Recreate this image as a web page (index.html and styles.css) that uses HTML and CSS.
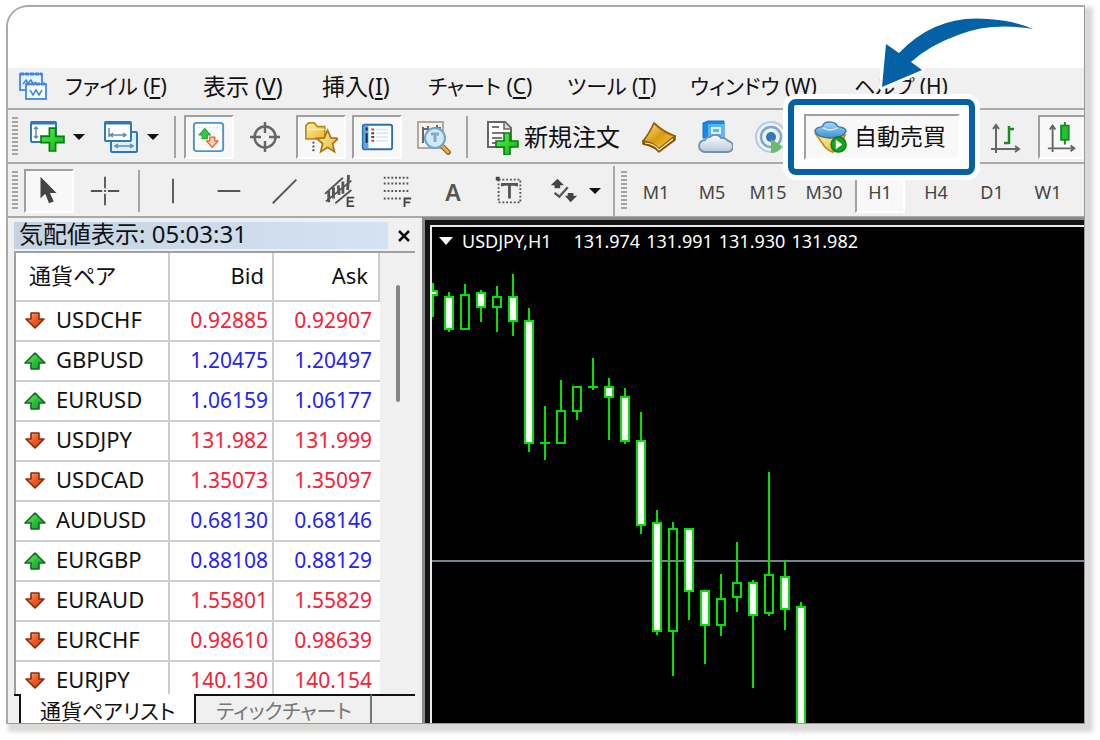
FILE: index.html
```html
<!DOCTYPE html>
<html lang="ja">
<head>
<meta charset="utf-8">
<title>USDJPY,H1</title>
<link rel="stylesheet" href="styles.css">
</head>
<body>
<svg class="defs" aria-hidden="true">
  <defs>
    <linearGradient id="red" x1="0" y1="0" x2="1" y2="1"><stop offset="0" stop-color="#ffb287"/><stop offset=".5" stop-color="#ec5a22"/><stop offset="1" stop-color="#d13c0c"/></linearGradient>
    <linearGradient id="green" x1="0" y1="0" x2="1" y2="1"><stop offset="0" stop-color="#8ff08f"/><stop offset=".5" stop-color="#2fbf3c"/><stop offset="1" stop-color="#119a22"/></linearGradient>
    <linearGradient id="plus" x1="0" y1="0" x2="1" y2="1"><stop offset="0" stop-color="#5df05a"/><stop offset="1" stop-color="#06b50a"/></linearGradient>
    <linearGradient id="gold" x1="0" y1="0" x2="1" y2="1"><stop offset="0" stop-color="#fff3a8"/><stop offset="1" stop-color="#e9b437"/></linearGradient>
    <linearGradient id="book" x1="0" y1="0" x2="1" y2="1"><stop offset="0" stop-color="#ffe58a"/><stop offset=".5" stop-color="#d99b14"/><stop offset="1" stop-color="#f5c94a"/></linearGradient>
    <linearGradient id="cloud" x1="0" y1="0" x2="0" y2="1"><stop offset="0" stop-color="#ffffff"/><stop offset="1" stop-color="#b4c7de"/></linearGradient>
    <linearGradient id="hat" x1="0" y1="0" x2="0" y2="1"><stop offset="0" stop-color="#a8d8fb"/><stop offset="1" stop-color="#3f8fd0"/></linearGradient>
    <symbol id="down" viewBox="0 0 22 22"><path d="M7 3h8v6h5l-9 9-9-9h5z" fill="url(#red)" stroke="#8e2a0a" stroke-width="1.6" stroke-linejoin="round"/></symbol>
    <symbol id="up" viewBox="0 0 22 22"><path d="M7 19h8v-6h6L11 3 1 13h6z" fill="url(#green)" stroke="#0d6d1a" stroke-width="1.6" stroke-linejoin="round"/></symbol>
    <symbol id="up-light" viewBox="0 0 22 22"><path d="M7 19h8v-6h5L11 3 2 13h5z" fill="#39c645" stroke="#1f9a2c" stroke-width="1.6" stroke-linejoin="round"/></symbol>
    <symbol id="down-light" viewBox="0 0 22 22"><path d="M7 3h8v6h5l-9 10L2 9h5z" fill="#ffd2b8" stroke="#ee5a26" stroke-width="2" stroke-linejoin="round"/></symbol>
    <symbol id="add" viewBox="0 0 24 24"><path d="M9 1h6v8h8v6h-8v8H9v-8H1V9h8z" fill="url(#plus)" stroke="#087d0c" stroke-width="1.6"/></symbol>
  </defs>
</svg>
<main class="window">
  <div class="titlebar"></div>

  <nav class="menubar">
    <svg class="app-icon" viewBox="0 0 30 30" aria-hidden="true"><g fill="#e8f1fd" stroke="#3e86ec" stroke-width="1.800"><rect x="2" y="3" width="22" height="16"/><path d="M2 3h22" stroke-width="3" stroke-dasharray="4 1"/><path d="M5 13l3-4 2 3 3-3 2 4 3-2" fill="none" stroke-width="1.500"/><rect x="8" y="13" width="20" height="15" fill="#fff"/><path d="M8 13h20" stroke-width="3" stroke-dasharray="4 1"/><path d="M12 19l3 5 3-5 3 5 3-5" fill="none" stroke-width="1.500"/></g></svg>
    <button>ファイル (<u>F</u>)</button>
    <button class="kanji">表示 (<u>V</u>)</button>
    <button class="kanji">挿入(<u>I</u>)</button>
    <button>チャート (<u>C</u>)</button>
    <button>ツール (<u>T</u>)</button>
    <button>ウィンドウ (W)</button>
    <button>ヘルプ (H)</button>
  </nav>

  <div class="toolbar" role="toolbar" aria-label="標準">
    <span class="grip"></span>
    <button class="tool menu-tool" aria-label="新規チャート">
      <svg viewBox="0 0 36 36"><rect x="2" y="3" width="25" height="20" rx="1" fill="#fff" stroke="#2f79b8" stroke-width="2"/><path d="M2 4h25" stroke="#2f79b8" stroke-width="3"/><path d="M7 8v11M5 10l2-2 2 2M5 17l2 2 2-2M11 17h8" fill="none" stroke="#5b8db4" stroke-width="1.500"/><use href="#add" x="11" y="8" width="25" height="25"/></svg>
      <i class="caret"></i>
    </button>
    <button class="tool menu-tool profiles" aria-label="プロファイル">
      <svg viewBox="0 0 36 36"><rect x="8" y="13" width="26" height="20" rx="1" fill="#dff0fb" stroke="#2f79b8" stroke-width="2"/><path d="M13 27h16M15 25l-3 2 3 2M27 25l3 2-3 2" fill="none" stroke="#5b8db4" stroke-width="1.500"/><rect x="2" y="3" width="26" height="19" rx="1" fill="#fff" stroke="#2f79b8" stroke-width="2"/><path d="M2 4h26" stroke="#2f79b8" stroke-width="3"/><path d="M6 9v9M8 16h15M10 14l-3 2 3 2M20 14l3 2-3 2" fill="none" stroke="#5b8db4" stroke-width="1.500"/></svg>
      <i class="caret"></i>
    </button>
    <span class="separator"></span>
    <button class="tool" aria-pressed="true" aria-label="気配値表示">
      <svg viewBox="0 0 36 36"><rect x="2" y="3" width="31" height="30" rx="3" fill="#fff" stroke="#4b93cd" stroke-width="2"/><path d="M6 8h23M6 14h23M6 20h23M6 26h23" stroke="#dde3e8" stroke-dasharray="2 2"/><use href="#up-light" x="6" y="7" width="15" height="15"/><use href="#down-light" x="14" y="16" width="15" height="15"/></svg>
    </button>
    <button class="tool" aria-label="データウィンドウ">
      <svg viewBox="0 0 36 36"><g fill="none" stroke="#666" stroke-width="2.500"><circle cx="18" cy="18" r="10.500"/><path d="M18 3v11M18 22v11M3 18h11M22 18h11"/></g></svg>
    </button>
    <button class="tool" aria-pressed="true" aria-label="ナビゲーター">
      <svg viewBox="0 0 36 36"><path d="M2 20V6l3-3h6l3 4h8v13z" fill="url(#gold)" stroke="#b98a1d" stroke-width="1.800"/><path d="M3 10h19" stroke="#fff8cd"/><path d="M10 23v12" stroke="#444" stroke-width="2" stroke-dasharray="2 2"/><path d="M25 11l3.500 8 8 .5-6.200 5.500 2 8.500L25 29l-7.300 4.500 2-8.500-6.200-5.500 8-.5z" fill="url(#gold)" stroke="#a77512" stroke-width="1.800"/></svg>
    </button>
    <button class="tool" aria-pressed="true" aria-label="ターミナル">
      <svg viewBox="0 0 36 36"><rect x="3" y="5" width="31" height="26" rx="2" fill="#fff" stroke="#2b70b0" stroke-width="2"/><path d="M4 6h5v24H4z" fill="#5fa5df"/><path d="M7 8v3M7 14v10" stroke="#124" stroke-width="2"/><path d="M17 10h13M17 14h13M17 18h13M17 22h13" stroke="#d3e6f5" stroke-width="1.500"/><path d="M12 10h3M12 22h3" stroke="#e33" stroke-width="2"/><path d="M12 14h3M12 18h3" stroke="#444" stroke-width="2"/></svg>
    </button>
    <button class="tool" aria-label="ストラテジーテスター">
      <svg viewBox="0 0 36 36"><rect x="3" y="3" width="25" height="26" fill="#f6f4f0" stroke="#aaa095" stroke-width="1.800"/><path d="M8 8v16M8 10h5M13 7v8M22 6v5M18 9h8" stroke="#666" stroke-width="2"/><path d="M26 26l9 9" stroke="#8b5a0a" stroke-width="5"/><path d="M26 26l8 8" stroke="#eab041" stroke-width="3"/><circle cx="20" cy="19" r="10" fill="#cfe8fa" fill-opacity=".9" stroke="#6da5d4" stroke-width="2"/><path d="M16 15h8M20 15v8" fill="none" stroke="#84a9c6" stroke-width="3"/></svg>
    </button>
    <span class="separator"></span>
    <button class="tool order"><svg viewBox="0 0 36 36"><path d="M4 3h17l6 6v19H4z" fill="#fff" stroke="#666" stroke-width="2"/><path d="M20 3v7h7" fill="#ddd" stroke="#666" stroke-width="1.500"/><path d="M8 8h7M8 14h12M8 19h10M8 24h6" stroke="#777" stroke-width="2"/><use href="#add" x="11" y="13" width="24" height="24"/></svg><span>新規注文</span></button>
    <button class="tool" aria-label="MetaEditor">
      <svg viewBox="0 0 36 36"><path d="M2 22v3q11 2 16 8l16-12v-4z" fill="#8f5a08" stroke="#7e4e06" stroke-width="1.500" stroke-linejoin="round"/><path d="M2 22Q8 15 13 4q9 9 21 13L18 30Q13 24 2 22z" fill="url(#book)" stroke="#94600c" stroke-width="1.800" stroke-linejoin="round"/><path d="M4 24q10 1 14 7l14-11" fill="none" stroke="#fff2b9" stroke-width="1.200"/></svg>
    </button>
    <button class="tool" aria-label="仮想ホスティング">
      <svg viewBox="0 0 36 36"><path d="M6 4l5-2h16v17H6z" fill="#1989e6" stroke="#1673c8"/><path d="M11 5h16v17H11z" fill="#54b7fa"/><path d="M15 9h8v5h-8zM11 18h12" fill="none" stroke="#e2f5ff" stroke-width="2"/><path d="M8 33a6 6 0 0 1 0-12 5 5 0 0 1 5-3 7 7 0 0 1 11 1 7 7 0 0 1 7 3 5.500 5.500 0 0 1-1 11z" fill="url(#cloud)" stroke="#758fae" stroke-width="1.800"/></svg>
    </button>
    <button class="tool signals" aria-label="シグナル">
      <svg viewBox="0 0 36 36"><g fill="none"><circle cx="18" cy="18" r="15" stroke="#b3cbdc" stroke-width="2"/><circle cx="18" cy="18" r="10" stroke="#7fa9c8" stroke-width="2.500"/></g><circle cx="18" cy="18" r="5" fill="#2f79b8"/><path d="M18 20v14q8 0 11-7" fill="#6bbb6c"/></svg>
    </button>
    <span class="callout">
      <button class="tool auto" aria-pressed="true"><svg viewBox="0 0 36 36"><path d="M2 15l14 4 17-3-7 14-6 4q-4-1-8-5z" fill="url(#gold)" stroke="#c58e1b" stroke-width="1.800"/><path d="M1 12q0-4 8-5 1-5 8-5 7 1 8 5 9 1 9 5-3 7-17 7Q4 19 1 12z" fill="url(#hat)" stroke="#3574aa" stroke-width="1.500"/><path d="M9 8q8 5 16 0" fill="none" stroke="#d1edff" stroke-width="1.500"/><circle cx="26" cy="26" r="8" fill="#12a51b" stroke="#08800f" stroke-width="1.500"/><path d="M23 21v10l7-5z" fill="#fff"/></svg><span>自動売買</span></button>
      <svg class="arrow" viewBox="0 0 170 90" aria-hidden="true"><path d="M12 77L16 34l13 9Q66 4 118 9q28 2 45 10-42-9-77 8Q56 43 41 51v1l11 8z" fill="none" stroke="#fff" stroke-width="6" stroke-linejoin="round"/><path d="M12 77L16 34l13 9Q66 4 118 9q28 2 45 10-42-7-75 6Q58 36 41 52l11 8z" fill="#0461a6"/></svg>
    </span>
    <button class="tool" aria-label="バーチャート">
      <svg viewBox="0 0 36 36"><path d="M7 6v28M2 30h28M4 10l3-4 3 4M26 27l4 3-4 3" fill="none" stroke="#666" stroke-width="2"/><path d="M20 7v18M20 10h5M15 24h5" stroke="#168d22" stroke-width="2.500"/></svg>
    </button>
    <button class="tool" aria-pressed="true" aria-label="ローソク足">
      <svg viewBox="0 0 36 36"><path d="M7 6v28M2 30h28M4 10l3-4 3 4M26 27l4 3-4 3" fill="none" stroke="#666" stroke-width="2"/><path d="M20 2v24" stroke="#168d22" stroke-width="2"/><rect x="16" y="6" width="8" height="15" fill="#20c52f" stroke="#168d22" stroke-width="2"/></svg>
    </button>
  </div>

  <div class="toolbar lines" role="toolbar" aria-label="ライン等">
    <span class="grip"></span>
    <button class="tool" aria-pressed="true" aria-label="カーソル"><svg viewBox="0 0 36 36"><path d="M9 3v23l5-5 4 10 5-2-4-9h7z" fill="#444"/></svg></button>
    <button class="tool" aria-label="十字カーソル"><svg viewBox="0 0 36 36"><path d="M18 3v12M18 21v12M3 18h12M21 18h12M17 18h2" stroke="#555" stroke-width="2"/></svg></button>
    <span class="separator tight"></span>
    <button class="tool" aria-label="垂直線"><svg viewBox="0 0 36 36"><path d="M18 5v26" stroke="#555" stroke-width="2"/></svg></button>
    <button class="tool" aria-label="水平線"><svg viewBox="0 0 36 36"><path d="M6 18h24" stroke="#555" stroke-width="2"/></svg></button>
    <button class="tool" aria-label="トレンドライン"><svg viewBox="0 0 36 36"><path d="M5 31L30 6" stroke="#555" stroke-width="2"/></svg></button>
    <button class="tool" aria-label="チャネル"><svg viewBox="0 0 36 36"><path d="M1 21L20 4M2 29L29 7M12 31L29 17" stroke="#555" stroke-width="2"/><path d="M5 18v12M10 14v12M15 12l1 10M20 8v13M26 1l-1 16" stroke="#555" stroke-width="3"/><path d="M32 25h-7v9h7M25 29h6" fill="none" stroke="#444" stroke-width="2"/></svg></button>
    <button class="tool" aria-label="フィボナッチ"><svg viewBox="0 0 36 36"><path d="M4 4h28M4 10h28M4 18h28M4 26h20" stroke="#555" stroke-width="2" stroke-dasharray="2 2"/><path d="M33 26h-7v9M26 30h6" fill="none" stroke="#444" stroke-width="2"/></svg></button>
    <button class="tool letter">A</button>
    <button class="tool" aria-label="テキストラベル"><svg viewBox="0 0 36 36"><rect x="7" y="6" width="23" height="24" fill="none" stroke="#555" stroke-width="2" stroke-dasharray="2 2"/><path d="M4 3h4v4H4z" fill="#444"/><path d="M11 13v-2h15v2M18.500 11v15" fill="none" stroke="#555" stroke-width="3"/></svg></button>
    <button class="tool menu-tool arrows" aria-label="矢印"><svg viewBox="0 0 36 36"><path d="M4 12l7-7 7 7h-4v3H8v-3zM19 23h3v-3h6v3h4l-7 7z" fill="#444"/><path d="M8 20l5 4 9-10" fill="none" stroke="#555" stroke-width="2.500"/></svg><i class="caret"></i></button>
    <span class="separator full"></span>
    <span class="grip second"></span>
    <button class="tool period">M1</button>
    <button class="tool period">M5</button>
    <button class="tool period">M15</button>
    <button class="tool period">M30</button>
    <button class="tool period" aria-pressed="true">H1</button>
    <button class="tool period">H4</button>
    <button class="tool period">D1</button>
    <button class="tool period">W1</button>
  </div>

  <div class="workspace">
    <section class="watch">
      <header class="caption"><h2>気配値表示: 05:03:31</h2><button class="close" aria-label="閉じる"><svg viewBox="0 0 12 12"><path d="M1 1l10 10M11 1L1 11" stroke="#111" stroke-width="2.500"/></svg></button></header>
      <div class="list">
        <table>
          <thead><tr><th>通貨ペア</th><th>Bid</th><th>Ask</th></tr></thead>
          <tbody>
            <tr class="down"><td><svg><use href="#down"/></svg>USDCHF</td><td>0.92885</td><td>0.92907</td></tr>
            <tr class="up"><td><svg><use href="#up"/></svg>GBPUSD</td><td>1.20475</td><td>1.20497</td></tr>
            <tr class="up"><td><svg><use href="#up"/></svg>EURUSD</td><td>1.06159</td><td>1.06177</td></tr>
            <tr class="down"><td><svg><use href="#down"/></svg>USDJPY</td><td>131.982</td><td>131.999</td></tr>
            <tr class="down"><td><svg><use href="#down"/></svg>USDCAD</td><td>1.35073</td><td>1.35097</td></tr>
            <tr class="up"><td><svg><use href="#up"/></svg>AUDUSD</td><td>0.68130</td><td>0.68146</td></tr>
            <tr class="up"><td><svg><use href="#up"/></svg>EURGBP</td><td>0.88108</td><td>0.88129</td></tr>
            <tr class="down"><td><svg><use href="#down"/></svg>EURAUD</td><td>1.55801</td><td>1.55829</td></tr>
            <tr class="down"><td><svg><use href="#down"/></svg>EURCHF</td><td>0.98610</td><td>0.98639</td></tr>
            <tr class="down"><td><svg><use href="#down"/></svg>EURJPY</td><td>140.130</td><td>140.154</td></tr>
          </tbody>
        </table>
        <div class="scroll"><span class="thumb"></span></div>
      </div>
      <div class="tabs">
        <button class="tab active">通貨ペアリスト</button>
        <button class="tab">ティックチャート</button>
      </div>
    </section>

    <section class="chart">
      <h2><i class="caret"></i><span class="symbol">USDJPY,H1</span><span>131.974</span><span>131.991</span><span>131.930</span><span>131.982</span></h2>
      <svg class="plot" role="img" aria-label="USDJPY H1">
        <g transform="translate(-432 -227)" stroke="#00e400" stroke-width="2">
          <path d="M432 561H5000" stroke="#748292"/>
          <path d="M433 283V317M449 292V332M465 284V294M481 290V322M497 286V296M497 307V332M513 274V336M529 308V452M545 406V460M540 443H550M561 380V410M577 411V420M593 358V390M588 387H598M609 378V440M625 388V444M641 412V534M657 510V635M673 522V528M673 631V676M689 528V620M705 590V664M721 574V598M721 625V636M737 542V582M737 597V612M753 580V688M769 472V574M769 613V616M785 560V630M801 602V640"/>
          <path fill="none" d="M461 295h8v34h-8zM493 297h8v10h-8zM557 411h8v32h-8zM573 387h8v24h-8zM669 529h8v102h-8zM717 599h8v26h-8zM733 583h8v14h-8zM765 575h8v38h-8z"/>
          <path fill="#fff" d="M429 291h8v4h-8zM445 297h8v32h-8zM477 293h8v14h-8zM509 297h8v24h-8zM525 321h8v122h-8zM605 387h8v10h-8zM621 397h8v44h-8zM637 441h8v84h-8zM653 523h8v108h-8zM685 529h8v62h-8zM701 591h8v34h-8zM749 583h8v32h-8zM781 577h8v32h-8zM797 607h8v400h-8z"/>
        </g>
      </svg>
    </section>
  </div>
</main>
</body>
</html>
```
FILE: styles.css
```css
* { box-sizing: border-box; }

body {
  margin: 0;
  height: 100vh;
  padding: 5px 15px 16px 6px;
  background: #fff;
  color: #111;
  font-family: "Noto Sans", "Noto Sans CJK JP", sans-serif;
  font-feature-settings: "palt";
}

button {
  margin: 0;
  padding: 0;
  border: 0;
  background: none;
  color: inherit;
  font: inherit;
  font-feature-settings: inherit;
  white-space: nowrap;
}

h2 { margin: 0; font-weight: 400; }

.defs { position: absolute; width: 0; height: 0; }

.window {
  display: flex;
  flex-direction: column;
  height: 100%;
  overflow: hidden;
  border: 2px solid #a9a9a9;
  border-right: 1px solid #999;
  border-bottom: 1px solid #999;
  border-radius: 22px 0 0 0;
  background: #f0f0f0;
  box-shadow: 5px 5px 4px 3px #dcdad9;
}

.titlebar { flex: none; height: 61px; background: #fff; }

/* Menu bar */
.menubar {
  display: grid;
  flex: none;
  align-items: center;
  justify-items: start;
  grid-template-columns: 47px 138px 119px 106px 139px 123px 164px auto;
  height: 42px;
  padding: 0 0 4px 10px;
  border-bottom: 2px solid #a9a9a9;
  font-size: 21px;
  line-height: 30px;
}
.menubar .kanji { font-size: 23px; }
.app-icon { width: 30px; height: 30px; }
.menubar u { text-underline-offset: 3px; text-decoration-thickness: 2px; }

/* Toolbars */
.toolbar {
  display: flex;
  flex: none;
  align-items: center;
  gap: 6px;
  height: 54px;
  padding: 2px 0 0 4px;
  border-bottom: 2px solid #a9a9a9;
}
.toolbar > * { flex: none; }

.grip {
  width: 6px;
  height: 40px;
  background: repeating-linear-gradient(#a5a5a5 0 2px, #f0f0f0 2px 4px);
}
.grip.second { margin-right: -2px; }

.separator { width: 2px; height: 42px; margin: 0 2px; background: #a5a5a5; }
.separator.full { height: 50px; margin: 0; }

.tool {
  display: flex;
  align-items: center;
  justify-content: center;
  width: 50px;
  height: 44px;
}
.tool svg { flex: none; width: 36px; height: 36px; }
.tool[aria-pressed="true"] {
  border: 2px solid #fff;
  border-top-color: #a0a0a0;
  border-left-color: #a0a0a0;
  background: #f8f8f8;
}

.menu-tool { width: 66px; gap: 8px; }
.menu-tool.profiles { width: 70px; }
.menu-tool.arrows { width: 67px; }

.caret {
  width: 0;
  height: 0;
  border: 6px solid transparent;
  border-top-color: #111;
  border-bottom: 0;
}

.order { width: 152px; gap: 4px; font-size: 24px; }
.signals { margin-right: 2px; }
.auto { width: 156px; gap: 6px; font-size: 23px; }
.auto svg, .toolbar [aria-pressed="true"]:not(.auto) svg { width: 34px; height: 34px; }
.order span, .auto span { padding-bottom: 4px; }
.lines .tool svg { width: 34px; height: 34px; }
.letter { color: #555; font-size: 23px; font-weight: 600; }
.period { color: #444; font-size: 18px; }
.lines .letter, .lines .period { padding-top: 2px; }

/* Highlight around the auto-trading button */
.callout { position: relative; z-index: 2; margin-right: 16px; }
.callout::before {
  content: "";
  position: absolute;
  inset: -15px -15px -15px -16px;
  border: 6px solid #0461a6;
  border-radius: 8px;
  background: #fff;
  box-shadow: 0 0 0 5px #fff;
}
.callout .tool { position: relative; height: 46px; padding-right: 4px; }
.arrow {
  position: absolute;
  top: -104px;
  left: 66px;
  width: 170px;
  height: 90px;
}

/* Workspace */
.workspace { display: flex; flex: 1; min-height: 0; }

.watch {
  display: flex;
  flex: none;
  flex-direction: column;
  width: 416px;
  padding: 4px 7px 0 6px;
  border-right: 2px solid #fff;
}
.caption { display: flex; flex: none; align-items: center; height: 27px; }
.caption h2 {
  flex: 1;
  height: 27px;
  padding-left: 5px;
  background: linear-gradient(90deg, #c4d2e2, #d4e2f1);
  font-size: 24px;
  line-height: 23px;
  white-space: nowrap;
}
.close { display: grid; place-items: center; width: 22px; height: 27px; margin-left: 5px; }
.close svg { width: 12px; height: 12px; }

.list {
  display: flex;
  flex: 1;
  min-height: 0;
  margin-top: 2px;
  overflow: hidden;
  border-top: 2px solid #a0a0a0;
  border-left: 2px solid #a0a0a0;
}
table {
  width: 364px;
  border-collapse: separate;
  border-spacing: 0;
  table-layout: fixed;
  background: #fff;
}
th, td {
  height: 40px;
  padding: 0 4px 4px 0;
  border-right: 2px solid #cdcdcd;
  border-bottom: 2px solid #cdcdcd;
  line-height: 30px;
  text-align: right;
}
th { height: 49px; padding-right: 10px; font-size: 22px; font-weight: 400; }
th:first-child { width: 154px; padding-left: 13px; text-align: left; }
th:nth-child(2) { width: 104px; padding-right: 8px; }
td { padding-bottom: 2px; font-size: 21px; }
td:first-child { padding: 0 0 4px 8px; font-size: 22px; text-align: left; }
td:last-child { padding-right: 8px; border-right: 0; }
td svg { width: 22px; height: 22px; margin-right: 10px; vertical-align: -4px; }
.down td + td { color: #fb2035; }
.up td + td { color: #2222fb; }

.scroll { flex: 1; display: flex; justify-content: center; padding-top: 32px; }
.thumb { width: 4px; height: 117px; border-radius: 2px; background: #858585; }

.tabs {
  display: flex;
  flex: none;
  height: 29px;
  overflow: hidden;
  font-size: 21px;
  line-height: 28px;
}
.tabs::before { content: ""; width: 5px; border-top: 2px solid #111; }
.tab {
  height: 29px;
  padding: 2px 18px 0 20px;
  border-top: 2px solid #111;
  border-right: 2px solid #777;
  color: #777;
  font-size: 20px;
}
.tabs .active {
  padding: 3px 19px 0;
  border: solid #111;
  border-width: 0 2px;
  background: #fff;
  color: #111;
  font-size: 21px;
}
.tabs::after { content: ""; flex: 1; border-top: 2px solid #111; }

/* Chart */
.chart {
  position: relative;
  flex: 1;
  min-width: 0;
  overflow: hidden;
  border: solid #e8e8e8;
  border-width: 2px 0 0 2px;
  margin: 7px 0 0 6px;
  background: #000;
  box-shadow: 0 0 0 5px #151515, 0 0 0 8px #8a8a8a;
  color: #fff;
}
.chart h2 {
  display: flex;
  align-items: center;
  gap: 6px;
  height: 28px;
  padding-left: 7px;
  font-size: 18px;
}
.chart .caret { border-width: 8px 7px 0; border-top-color: #fff; margin-right: 3px; }
.chart .symbol { margin-right: 16px; }
.plot { position: absolute; inset: 0; width: 100%; height: 100%; }
```
